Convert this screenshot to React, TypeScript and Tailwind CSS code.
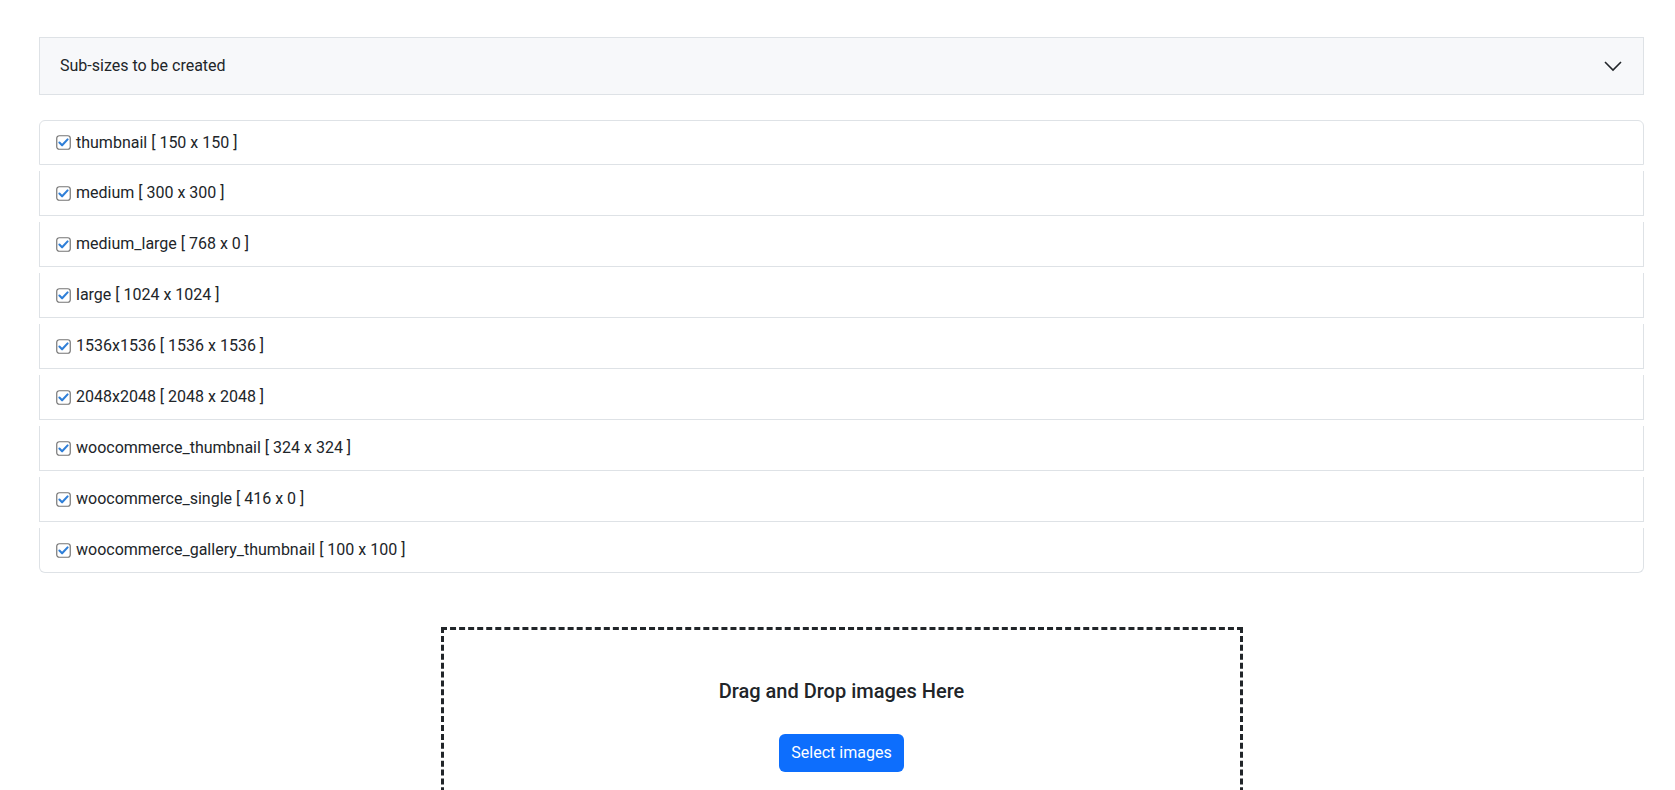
const sizes = [
  'thumbnail [ 150 x 150 ]',
  'medium [ 300 x 300 ]',
  'medium_large [ 768 x 0 ]',
  'large [ 1024 x 1024 ]',
  '1536x1536 [ 1536 x 1536 ]',
  '2048x2048 [ 2048 x 2048 ]',
  'woocommerce_thumbnail [ 324 x 324 ]',
  'woocommerce_single [ 416 x 0 ]',
  'woocommerce_gallery_thumbnail [ 100 x 100 ]',
];

// Windows-style checked box: white square, grey frame, blue tick
const Check = () => (
  <svg width="15" height="15" viewBox="0 0 15 15" className="shrink-0">
    <rect x="0.75" y="0.75" width="13.5" height="13.5" rx="2.5" fill="#fff" stroke="#767676" strokeWidth="1.2" />
    <path d="M3.4 7.6 L6.1 10.3 L11.6 4.4" fill="none" stroke="#2f7fd8" strokeWidth="2.1" strokeLinecap="round" strokeLinejoin="round" />
  </svg>
);

const Chevron = () => (
  <svg width="20" height="20" viewBox="0 0 20 20" className="shrink-0">
    <path d="M2 6 L10 14 L18 6" fill="none" stroke="#212529" strokeWidth="1.6" />
  </svg>
);

export default function App() {
  return (
    <div className="min-h-screen bg-white font-['Roboto',sans-serif] text-[#212529]">
      <div className="ml-[39px] w-[1605px] pt-[37px]">
        {/* Accordion header */}
        <div className="flex h-[58px] items-center justify-between border border-[#dee2e6] bg-[#f7f8fa] pl-5 pr-[20px]">
          <span className="text-base">Sub-sizes to be created</span>
          <Chevron />
        </div>

        {/* Sub-size list */}
        <ul className="mt-[25px] flex flex-col gap-[6px]">
          {sizes.map((s, i) => (
            <li
              key={s}
              className={
                i === 0
                  ? 'flex h-[45px] items-center gap-[5px] rounded-t-md border border-[#dee2e6] pl-4'
                  : i === sizes.length - 1
                    ? 'flex h-[45px] items-center gap-[5px] rounded-b-md border-x border-b border-[#dee2e6] pl-4'
                    : 'flex h-[45px] items-center gap-[5px] border-x border-b border-[#dee2e6] pl-4'
              }
            >
              <Check />
              <span className="text-base">{s}</span>
            </li>
          ))}
        </ul>

        {/* Drop zone */}
        <div className="mx-auto mt-[54px] flex h-[300px] w-[802px] flex-col items-center border-[3px] border-dashed border-[#212529] pt-[49px]">
          <h5 className="text-xl font-medium leading-6">Drag and Drop images Here</h5>
          <button className="mt-[31px] h-[38px] rounded-md bg-[#0d6efd] px-3 text-base text-white">
            Select images
          </button>
        </div>
      </div>
    </div>
  );
}
